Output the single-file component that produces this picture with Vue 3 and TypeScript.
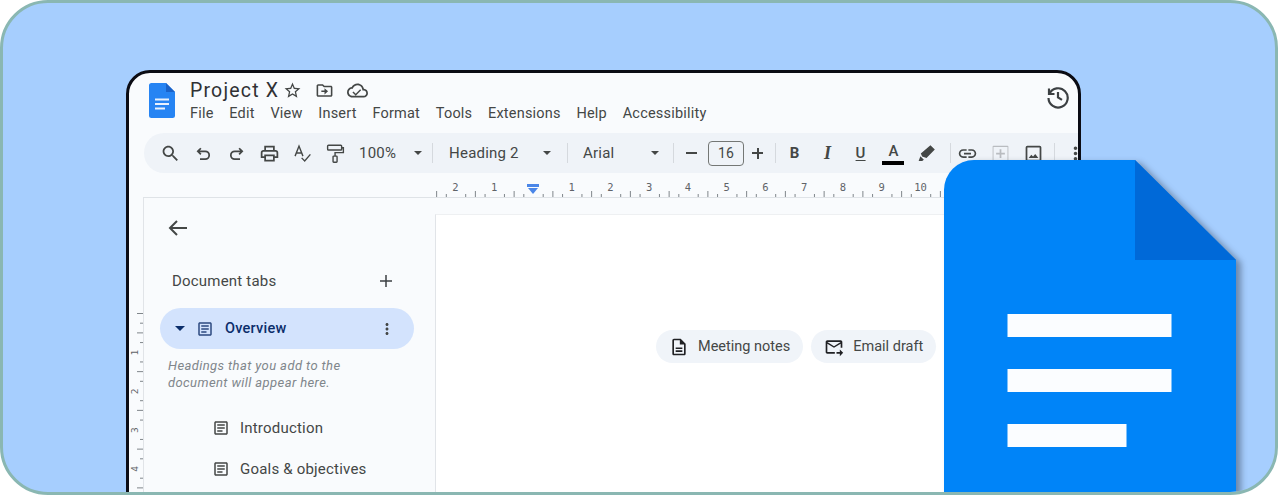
<script setup lang="ts">
import { computed } from 'vue'

const menu = ['File', 'Edit', 'View', 'Insert', 'Format', 'Tools', 'Extensions', 'Help', 'Accessibility']

const icons = {
  star: 'M22 9.24l-7.19-.62L12 2 9.19 8.63 2 9.24l5.46 4.73L5.82 21 12 17.27 18.18 21l-1.63-7.03L22 9.24zM12 15.4l-3.76 2.27 1-4.28-3.32-2.88 4.38-.38L12 6.1l1.71 4.04 4.38.38-3.32 2.88 1 4.28L12 15.4z',
  folder: 'M20 6h-8l-2-2H4c-1.1 0-2 .9-2 2v12c0 1.1.9 2 2 2h16c1.1 0 2-.9 2-2V8c0-1.1-.9-2-2-2zm0 12H4V6h5.17l2 2H20v10zM12 17l4.5-4L12 9v3H8v2h4z',
  cloud: 'M19.35 10.04C18.67 6.59 15.64 4 12 4 9.11 4 6.6 5.64 5.35 8.04 2.34 8.36 0 10.91 0 14c0 3.31 2.69 6 6 6h13c2.76 0 5-2.24 5-5 0-2.64-2.05-4.78-4.65-4.96zM19 18H6c-2.21 0-4-1.79-4-4 0-2.05 1.53-3.76 3.56-3.97l1.07-.11.5-.95C8.08 7.14 9.94 6 12 6c2.62 0 4.88 1.86 5.39 4.43l.3 1.5 1.53.11c1.56.1 2.78 1.41 2.78 2.96 0 1.65-1.35 3-3 3zm-9-2.4l-2.6-2.6-1.2 1.2 3.8 3.8 6.2-6.2-1.2-1.2z',
  search: 'M15.5 14h-.79l-.28-.27C15.41 12.59 16 11.11 16 9.5 16 5.91 13.09 3 9.5 3S3 5.91 3 9.5 5.91 16 9.5 16c1.61 0 3.09-.59 4.23-1.57l.27.28v.79l5 4.99L20.49 19l-4.99-5zm-6 0C7.01 14 5 11.99 5 9.5S7.01 5 9.5 5 14 7.01 14 9.5 11.99 14 9.5 14z',
  print: 'M19 8h-1V3H6v5H5c-1.66 0-3 1.34-3 3v6h4v4h12v-4h4v-6c0-1.66-1.34-3-3-3zM8 5h8v3H8V5zm8 12v2H8v-4h8v2zm2-2v-2H6v2H4v-4c0-.55.45-1 1-1h14c.55 0 1 .45 1 1v4h-2z',
  link: 'M3.9 12c0-1.71 1.39-3.1 3.1-3.1h4V7H7c-2.76 0-5 2.24-5 5s2.24 5 5 5h4v-1.9H7c-1.71 0-3.1-1.39-3.1-3.1zM8 13h8v-2H8v2zm9-6h-4v1.9h4c1.71 0 3.1 1.39 3.1 3.1s-1.39 3.1-3.1 3.1h-4V17h4c2.76 0 5-2.24 5-5s-2.24-5-5-5z',
  article: 'M19 5v14H5V5h14m0-2H5c-1.1 0-2 .9-2 2v14c0 1.1.9 2 2 2h14c1.1 0 2-.9 2-2V5c0-1.1-.9-2-2-2zM14 17H7v-2h7v2zm3-4H7v-2h10v2zm0-4H7V7h10v2z',
  note: 'M14 2H6c-1.1 0-2 .9-2 2v16c0 1.1.9 2 2 2h12c1.1 0 2-.9 2-2V8l-6-6zm4 18H6V4h7v5h5v11zM8 12.5h8v2H8zM8 16h8v2H8z',
  mail: 'M20 4H4c-1.1 0-2 .9-2 2v12c0 1.1.9 2 2 2h9v-2H4V8l8 5 8-5v5h2V6c0-1.1-.9-2-2-2zm-8 7L4 6h16l-8 5zm7 4l4 4-4 4v-3h-4v-2h4v-3z',
  pen: 'M16.500 2.500l5 5-9.500 9.500-5-1.500-1.500-3.500zM5 15l4 4-2 1.500H3z',
  dots: 'M12 8c1.1 0 2-.9 2-2s-.9-2-2-2-2 .9-2 2 .9 2 2 2zm0 2c-1.1 0-2 .9-2 2s.9 2 2 2 2-.9 2-2-.9-2-2-2zm0 6c-1.1 0-2 .9-2 2s.9 2 2 2 2-.9 2-2-.9-2-2-2z'
}

const unit = 38.75
const zeroX = 97 // marker position inside the ruler svg

const hTicks = computed(() => {
  const out: { x: number; h: number }[] = []
  for (let i = -10; i <= 43; i++) {
    if (i % 4 === 0) continue
    out.push({ x: zeroX + (i * unit) / 4, h: i % 2 === 0 ? 6 : 3 })
  }
  return out
})

const hNums = computed(() => {
  const out: { x: number; label: number }[] = []
  for (let i = -2; i <= 10; i++) {
    if (i !== 0) out.push({ x: zeroX + i * unit, label: Math.abs(i) })
  }
  return out
})

const vTicks = computed(() => {
  const out: { y: number; w: number }[] = []
  for (let i = 0; i <= 19; i++) {
    if (i % 4 === 0 && i > 0) continue
    out.push({ y: (i * unit) / 4 + 2, w: i % 2 === 0 ? 6 : 3 })
  }
  return out
})
</script>

<template>
  <div class="card">
    <div class="window">
      <header class="head">
        <svg class="logo" viewBox="0 0 26 35">
          <path d="M2.5 0H17l9 9v23.500a2.500 2.500 0 0 1-2.500 2.500h-21A2.500 2.500 0 0 1 0 32.500v-30A2.500 2.500 0 0 1 2.500 0z" fill="#2684f3" />
          <path d="M17 0l9 9h-9z" fill="#1a62c8" />
          <path d="M6 15.500h14v2H6zM6 20h14v2H6zM6 24.500h10v2H6z" fill="#e8f1fd" />
        </svg>
        <div class="titles">
          <div class="title-row">
            <span class="title">Project X</span>
            <svg class="ic i-star" viewBox="0 0 24 24"><path :d="icons.star" /></svg>
            <svg class="ic i-folder" viewBox="0 0 24 24"><path :d="icons.folder" /></svg>
            <svg class="ic i-cloud" viewBox="0 0 24 24"><path :d="icons.cloud" /></svg>
          </div>
          <nav class="menu">
            <span v-for="m in menu" :key="m">{{ m }}</span>
          </nav>
        </div>
        <svg class="history" viewBox="0 0 24 24" fill="none" stroke="#3c4043" stroke-width="2.200">
          <path d="M3 3.500V9h5.500" />
          <path d="M3.400 8.800A9.600 9.600 0 1 1 2.500 13" />
          <path d="M12 7v5.500l4 2.400" />
        </svg>
      </header>

      <div class="toolbar">
        <span class="tb"><svg class="ic" viewBox="0 0 24 24"><path :d="icons.search" /></svg></span>
        <span class="tb"><svg class="ic" viewBox="0 0 24 24"><path class="line" d="M9 6L5.500 9.500 9 13M5.500 9.500H14a4.500 4.500 0 0 1 0 9H8" /></svg></span>
        <span class="tb"><svg class="ic" viewBox="0 0 24 24"><path class="line" d="M15 6l3.500 3.500L15 13M18.500 9.500H10a4.500 4.500 0 0 0 0 9h6" /></svg></span>
        <span class="tb"><svg class="ic" viewBox="0 0 24 24"><path :d="icons.print" /></svg></span>
        <span class="tb"><svg class="ic" viewBox="0 0 24 24"><path class="thin" d="M3.500 15L8 3.500 12.500 15M5 11.500h6M11 17l3.500 3.500L21 13" /></svg></span>
        <span class="tb"><svg class="ic" viewBox="0 0 24 24"><path class="thin" d="M4 2.500h14a1 1 0 0 1 1 1V7a1 1 0 0 1-1 1H4a1 1 0 0 1-1-1V3.500a1 1 0 0 1 1-1zM19 5.500h2v5.500h-9.500v4M10 15h3a.8.800 0 0 1 .8.800v5.400a.8.800 0 0 1-.8.800h-3a.8.800 0 0 1-.8-.800v-5.400A.8.800 0 0 1 10 15z" /></svg></span>
        <span class="zoom">100%</span>
        <i class="caret c-zoom"></i>
        <i class="sep"></i>
        <span class="select s-style">Heading 2</span>
        <i class="caret"></i>
        <i class="sep s2"></i>
        <span class="select s-font">Arial</span>
        <i class="caret"></i>
        <i class="sep s2b"></i>
        <span class="step minus"></span>
        <span class="size">16</span>
        <span class="step plus"></span>
        <i class="sep s3"></i>
        <span class="tb fmt b">B</span>
        <span class="tb fmt it">I</span>
        <span class="tb fmt u">U</span>
        <span class="tb fmt a">A</span>
        <span class="tb"><svg class="ic" viewBox="0 0 24 24"><path :d="icons.pen" /></svg></span>
        <i class="sep s4"></i>
        <span class="tb"><svg class="ic" viewBox="0 0 24 24"><path :d="icons.link" /></svg></span>
        <span class="tb"><svg class="ic faint" viewBox="0 0 24 24"><path d="M4 3h16a1 1 0 0 1 1 1v16a1 1 0 0 1-1 1H4a1 1 0 0 1-1-1V4a1 1 0 0 1 1-1zm0 1.500v15h16v-15zM11 7h2v4h4v2h-4v4h-2v-4H7v-2h4z" /></svg></span>
        <span class="tb"><svg class="ic" viewBox="0 0 24 24"><path d="M5 3h14a2 2 0 0 1 2 2v14a2 2 0 0 1-2 2H5a2 2 0 0 1-2-2V5a2 2 0 0 1 2-2zm0 2v14h14V5zm1.500 12l3-3.500 2 2 2.500-3 3.500 4.500z" /></svg></span>
        <i class="sep s5"></i>
        <span class="tb"><svg class="ic" viewBox="0 0 24 24"><path :d="icons.dots" /></svg></span>
      </div>

      <div class="ruler-row">
        <svg class="h-ruler" width="510" height="25">
          <rect v-for="t in hTicks" :key="t.x" :x="t.x" :y="24 - t.h" width="1" :height="t.h" fill="#80868b" />
          <text v-for="n in hNums" :key="n.x" :x="n.x" y="18" text-anchor="middle" class="ruler-num">{{ n.label }}</text>
          <path :d="`M${zeroX - 6} 11h12v3h-12z`" fill="#4a86e8" />
          <path :d="`M${zeroX - 5} 15h10l-5 6z`" fill="#4a86e8" />
        </svg>
      </div>

      <div class="body">
        <div class="v-ruler">
          <svg width="14" height="190">
            <rect v-for="t in vTicks" :key="t.y" :x="14 - t.w" :y="t.y" :width="t.w" height="1" fill="#80868b" />
            <text v-for="n in 4" :key="n" class="ruler-num v-num" text-anchor="middle" :transform="`translate(9 ${n * 38.75 + 3}) rotate(-90)`">{{ n }}</text>
          </svg>
        </div>
        <aside class="side">
          <svg class="back" viewBox="0 0 24 24" fill="none" stroke="#444746" stroke-width="2"><path d="M21 12H4M11 5l-7 7 7 7" /></svg>
          <div class="tabs-head">
            <span>Document tabs</span>
            <svg class="ic add" viewBox="0 0 24 24"><path d="M11 4h2v7h7v2h-7v7h-2v-7H4v-2h7z" /></svg>
          </div>
          <div class="pill">
            <i class="caret dark"></i>
            <svg class="ic art" viewBox="0 0 24 24"><path :d="icons.article" /></svg>
            <span class="pill-text">Overview</span>
            <svg class="ic more" viewBox="0 0 24 24"><path :d="icons.dots" /></svg>
          </div>
          <p class="hint">Headings that you add to the<br />document will appear here.</p>
          <div class="item first">
            <svg class="ic" viewBox="0 0 24 24"><path :d="icons.article" /></svg>
            <span>Introduction</span>
          </div>
          <div class="item">
            <svg class="ic" viewBox="0 0 24 24"><path :d="icons.article" /></svg>
            <span>Goals &amp; objectives</span>
          </div>
        </aside>
        <main class="page">
          <div class="chips">
            <div class="chip">
              <svg class="ic dark-ic" viewBox="0 0 24 24"><path :d="icons.note" /></svg>
              <span>Meeting notes</span>
            </div>
            <div class="chip">
              <svg class="ic dark-ic" viewBox="0 0 24 24"><path :d="icons.mail" /></svg>
              <span>Email draft</span>
            </div>
          </div>
        </main>
      </div>
    </div>

    <!-- big logo sits over the window -->
    <svg class="big-doc" width="300" height="340" viewBox="0 0 300 340">
      <path d="M30 0H191L292 100V340H0V30A30 30 0 0 1 30 0z" fill="#0084f8" />
      <path d="M191 0L292 100H191z" fill="#0069d8" />
      <rect x="63.500" y="154" width="164" height="23" fill="#fbfdff" />
      <rect x="63.500" y="209" width="164" height="23" fill="#fbfdff" />
      <rect x="63.500" y="264" width="119" height="23" fill="#fbfdff" />
    </svg>
  </div>
</template>

<style>
html,
body {
  margin: 0;
  background: #fff;
}
</style>

<style scoped>
.card {
  position: relative;
  box-sizing: border-box;
  width: 1278px;
  height: 495px;
  padding: 67px 0 0 123px;
  border: 3px solid #8ab7b2;
  border-radius: 48px;
  background: #a6cefe;
  overflow: hidden;
  font-family: Roboto, "Liberation Sans", sans-serif;
}

.window {
  box-sizing: border-box;
  width: 955px;
  height: 560px;
  border: 3px solid #0b0c14;
  border-radius: 24px;
  background: #f9fbfd;
  overflow: hidden;
}

.ic {
  display: block;
  width: 18px;
  height: 18px;
  fill: #444746;
  flex: none;
}

.line,
.thin {
  fill: none;
  stroke: #444746;
  stroke-width: 2;
}

.thin {
  stroke-width: 1.600;
}

.faint {
  fill: #b9bcc0;
}

.head {
  display: flex;
  height: 60px;
  padding-left: 20px;
  box-sizing: border-box;
}

.logo {
  width: 26px;
  height: 35px;
  margin-top: 10px;
  flex: none;
}

.titles {
  margin-left: 15px;
}

.title-row {
  display: flex;
  align-items: center;
  height: 28px;
  margin-top: 3px;
}

.title {
  width: 93px;
  font-size: 19.500px;
  letter-spacing: 1.200px;
  color: #303134;
  white-space: nowrap;
}

.i-star {
  width: 19px;
  height: 19px;
}

.i-folder {
  margin-left: 13px;
  width: 19px;
  height: 19px;
}

.i-cloud {
  margin-left: 13px;
  width: 21px;
  height: 21px;
}

.menu {
  display: flex;
  gap: 15.750px;
  margin-top: -1px;
  font-size: 14.500px;
  letter-spacing: 0.2px;
  line-height: 22px;
  color: #444746;
}

.history {
  width: 24px;
  height: 24px;
  margin: 12px 8px 0 auto;
}

.toolbar {
  display: flex;
  align-items: center;
  height: 40px;
  margin-left: 15px;
  padding-left: 10px;
  border-radius: 20px 0 0 20px;
  background: #eff3f8;
  color: #444746;
  font-size: 15px;
  letter-spacing: 0.2px;
  white-space: nowrap;
}

.tb {
  display: flex;
  align-items: center;
  justify-content: center;
  width: 33px;
  height: 24px;
  flex: none;
}

.tb .ic {
  width: 21px;
  height: 21px;
}

.zoom {
  margin-left: 7px;
  width: 45px;
}

.caret {
  display: block;
  width: 0;
  height: 0;
  flex: none;
  border-left: 4.500px solid transparent;
  border-right: 4.500px solid transparent;
  border-top: 4.500px solid #444746;
}

.c-zoom {
  margin-left: 18px;
}

.caret.dark {
  border-left-width: 5.500px;
  border-right-width: 5.500px;
  border-top-width: 5.500px;
  border-top-color: #0b2e6b;
  margin-left: 15px;
}

.sep {
  display: block;
  width: 1px;
  height: 20px;
  flex: none;
  margin: 0 16px 0 10px;
  background: #d5d9de;
}

.s2 {
  margin: 0 15px 0 16px;
}

.s2b {
  margin: 0 15px 0 14px;
}

.s3 {
  margin: 0 2px 0 1px;
}

.s4 {
  margin: 0 0 0 7px;
}

.s5 {
  margin: 0 4px;
}

.select {
  flex: none;
}

.s-style {
  width: 94px;
}

.s-font {
  width: 68px;
}

.step {
  position: relative;
  flex: none;
  width: 34px;
  height: 24px;
}

.step::before {
  content: '';
  position: absolute;
  left: 12px;
  top: 11px;
  width: 11px;
  height: 2px;
  background: #444746;
}

.plus::after {
  content: '';
  position: absolute;
  left: 16.500px;
  top: 6.500px;
  width: 2px;
  height: 11px;
  background: #444746;
}

.minus {
  margin-left: -15px;
  width: 36px;
}

.size {
  box-sizing: border-box;
  flex: none;
  width: 36px;
  height: 25px;
  margin-left: -2px;
  border: 1px solid #747775;
  border-radius: 4px;
  line-height: 23px;
  text-align: center;
  font-size: 14px;
}

.plus {
  margin-left: -4px;
}

.fmt {
  font-size: 15px;
  color: #444746;
}

.b {
  font-weight: 700;
}

.it {
  font-style: italic;
  font-weight: 700;
  font-family: "Liberation Serif", serif;
  font-size: 18px;
}

.u {
  text-decoration: underline;
  text-underline-offset: 2px;
  font-weight: 500;
}

.a {
  position: relative;
  font-weight: 500;
  padding-bottom: 5px;
  height: 19px;
}

.a::after {
  content: '';
  position: absolute;
  left: 5px;
  right: 6px;
  bottom: 0;
  height: 4px;
  background: #000;
}

.ruler-row {
  box-sizing: border-box;
  height: 25px;
  margin-left: 14px;
  padding-left: 293px;
  border-bottom: 1px solid #dfe3e7;
}

.h-ruler {
  display: block;
}

.ruler-num {
  font-family: "DejaVu Sans Mono", monospace;
  font-size: 10.500px;
  fill: #5f6368;
}

.v-num {
  font-size: 9.500px;
}

.body {
  display: flex;
  height: 300px;
}

.v-ruler {
  width: 14px;
  padding-top: 113px;
  flex: none;
}

.v-ruler svg {
  display: block;
}

.side {
  box-sizing: border-box;
  width: 292px;
  flex: none;
  padding: 0 21px 0 16px;
  border-left: 1px solid #e1e4e8;
}

.back {
  display: block;
  width: 24px;
  height: 24px;
  margin: 18px 0 0 6px;
}

.tabs-head {
  display: flex;
  align-items: center;
  justify-content: space-between;
  height: 22px;
  margin: 30px 0 0 12px;
  font-size: 15px;
  letter-spacing: 0.2px;
  color: #444746;
}

.add {
  fill: #3c4043;
  margin-right: 19px;
}

.pill {
  display: flex;
  align-items: center;
  height: 41px;
  margin-top: 16px;
  border-radius: 21px;
  background: #d3e3fd;
  color: #0b2e6b;
}

.art {
  margin-left: 11px;
  fill: #2c4a80;
}

.pill-text {
  margin-left: 11px;
  font-size: 14.500px;
  font-weight: 500;
  letter-spacing: 0.25px;
}

.more {
  margin-left: auto;
  margin-right: 18px;
}

.hint {
  margin: 8px 0 0 8px;
  font-size: 13px;
  line-height: 17px;
  letter-spacing: 0.4px;
  font-style: italic;
  color: #80868b;
}

.item {
  display: flex;
  align-items: center;
  gap: 10px;
  height: 41px;
  margin-left: 52px;
  font-size: 15px;
  letter-spacing: 0.2px;
  color: #444746;
}

.item.first {
  margin-top: 16px;
}

.page {
  flex: 1;
  margin-top: 16px;
  padding: 115px 0 0 220px;
  background: #fff;
  border-left: 1px solid #e1e4e8;
  border-top: 1px solid #eef0f2;
}

.chips {
  display: flex;
  gap: 8px;
}

.chip {
  display: flex;
  align-items: center;
  gap: 9px;
  height: 33px;
  padding: 0 13px 0 13px;
  border-radius: 17px;
  background: #f0f4f9;
  font-size: 14.500px;
  color: #444746;
  white-space: nowrap;
}

.chip .ic {
  width: 20px;
  height: 20px;
}

.dark-ic {
  fill: #202124;
}

.big-doc {
  position: absolute;
  left: 941px;
  top: 157px;
  filter: drop-shadow(5px 3px 3px rgba(40, 50, 70, 0.45));
}
</style>
